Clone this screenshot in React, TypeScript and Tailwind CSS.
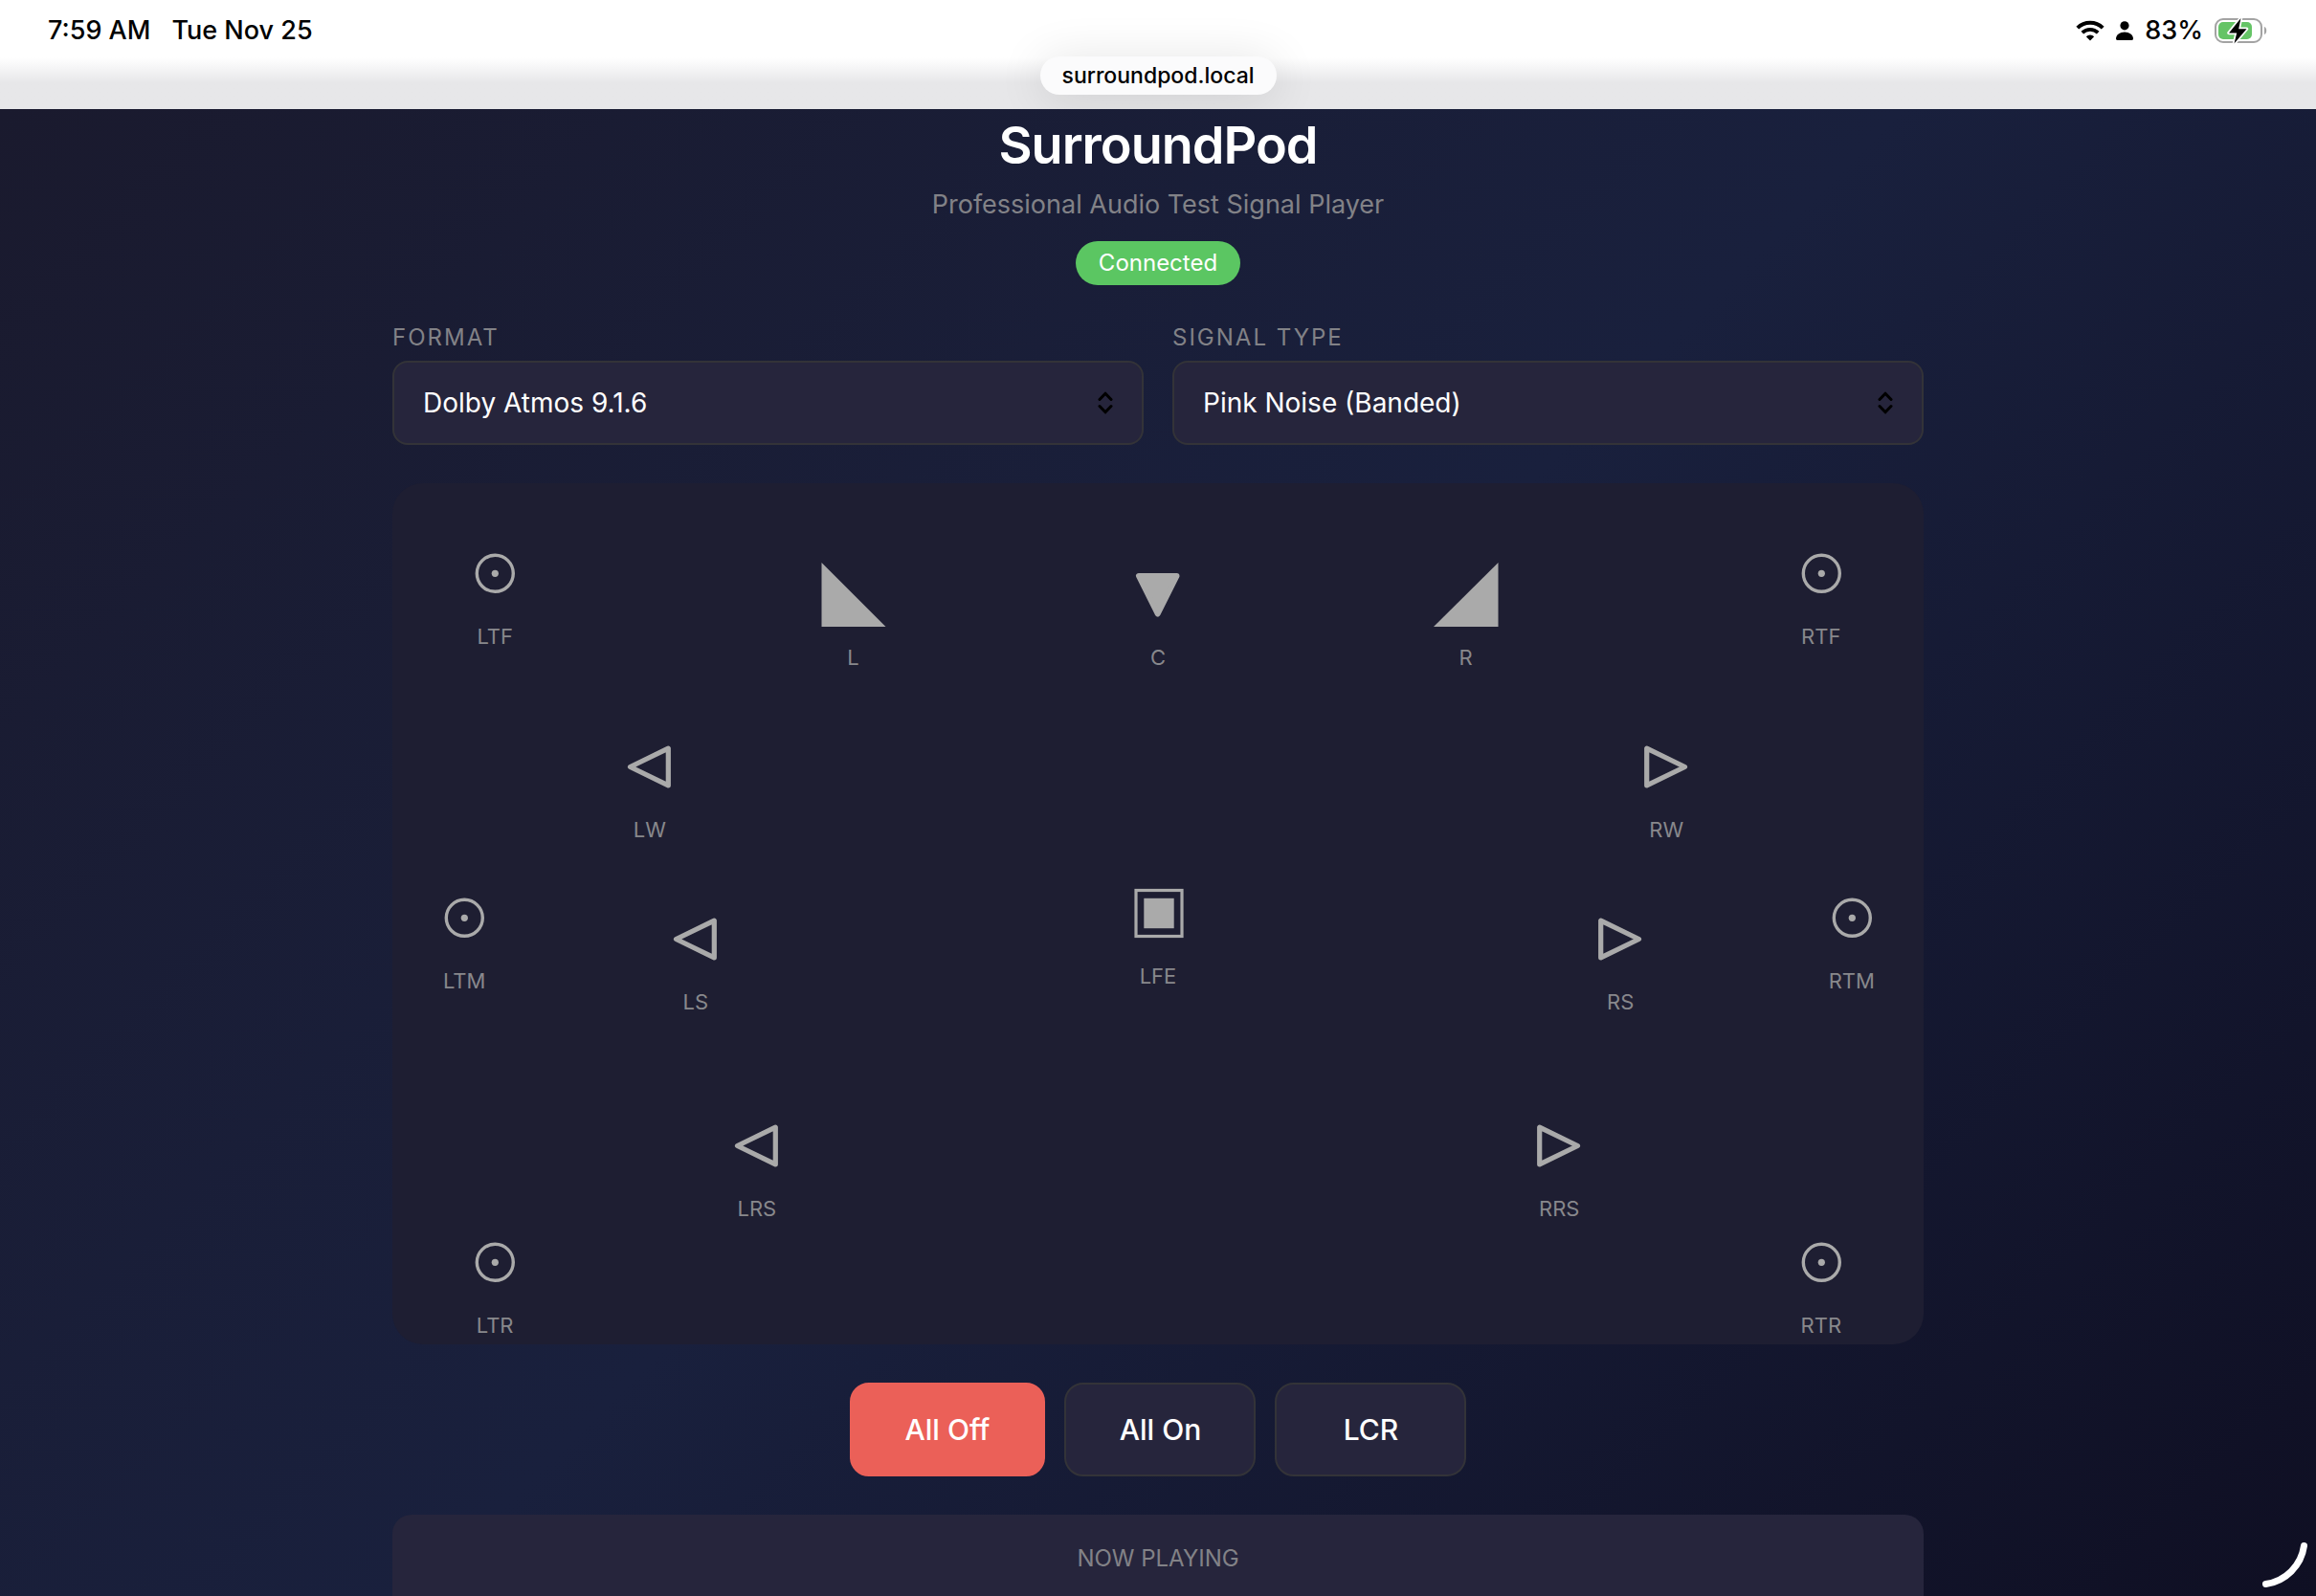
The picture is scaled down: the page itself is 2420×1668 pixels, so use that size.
import { useState } from 'react'

type Shape = 'left' | 'right' | 'center' | 'cornerLeft' | 'cornerRight' | 'sub' | 'height'

interface Speaker {
  id: string
  shape: Shape
  x: number
  y: number
}

// x and y are percentages of the room
const speakers: Speaker[] = [
  { id: 'LTF', shape: 'height', x: 6.7, y: 12.5 },
  { id: 'L', shape: 'cornerLeft', x: 30.1, y: 15 },
  { id: 'C', shape: 'center', x: 50, y: 15 },
  { id: 'R', shape: 'cornerRight', x: 70.1, y: 15 },
  { id: 'RTF', shape: 'height', x: 93.3, y: 12.5 },
  { id: 'LW', shape: 'left', x: 16.8, y: 35 },
  { id: 'RW', shape: 'right', x: 83.2, y: 35 },
  { id: 'LTM', shape: 'height', x: 4.7, y: 52.5 },
  { id: 'LS', shape: 'left', x: 19.8, y: 55 },
  { id: 'LFE', shape: 'sub', x: 50, y: 52 },
  { id: 'RS', shape: 'right', x: 80.2, y: 55 },
  { id: 'RTM', shape: 'height', x: 95.3, y: 52.5 },
  { id: 'LRS', shape: 'left', x: 23.8, y: 79 },
  { id: 'RRS', shape: 'right', x: 76.2, y: 79 },
  { id: 'LTR', shape: 'height', x: 6.7, y: 92.5 },
  { id: 'RTR', shape: 'height', x: 93.3, y: 92.5 },
]

const formats = ['Dolby Atmos 9.1.6', 'Dolby Atmos 7.1.4', 'Surround 5.1', 'Stereo']
const signals = ['Pink Noise (Banded)', 'Pink Noise (Full)', 'Sine Sweep']

function SpeakerIcon({ shape }: { shape: Shape }) {
  return (
    <svg viewBox="0 0 80 80" className="size-20" fill="none" stroke="currentColor" aria-hidden="true">
      {shape === 'height' && (
        <>
          <circle cx="40.3" cy="40.3" r="19" strokeWidth="3.4" />
          <circle cx="40.3" cy="40.3" r="3.6" fill="currentColor" stroke="none" />
        </>
      )}
      {shape === 'left' && (
        <path d="M59.300 21.200V59.800L19.500 40.500Z" strokeWidth="5.200" strokeLinejoin="round" />
      )}
      {shape === 'right' && (
        <path d="M19.700 21.200V59.800L59.500 40.500Z" strokeWidth="5.200" strokeLinejoin="round" />
      )}
      {shape === 'center' && (
        <path d="M20 21H59.500L39.700 60.500Z" fill="currentColor" strokeWidth="6" strokeLinejoin="round" />
      )}
      {shape === 'cornerLeft' && <path d="M6.5 7V74H73.5Z" fill="currentColor" stroke="none" />}
      {shape === 'cornerRight' && <path d="M73.5 7V74H6Z" fill="currentColor" stroke="none" />}
      {shape === 'sub' && (
        <>
          <rect x="17" y="16.500" width="48" height="48" strokeWidth="3.200" />
          <rect x="25.300" y="24.800" width="31.400" height="31.400" fill="currentColor" stroke="none" />
        </>
      )}
    </svg>
  )
}

function StatusBar() {
  return (
    <header className="relative h-[114px] shrink-0 bg-linear-to-b from-white from-53% to-[#e7e7e9] to-76% px-[50px] text-black">
      <div className="flex h-16 items-center justify-between text-[27px] leading-8 font-medium">
        <div className="flex gap-[22px]">
          <span>7:59 AM</span>
          <span>Tue Nov 25</span>
        </div>
        <div className="flex items-center gap-3">
          <svg viewBox="0 0 30 22" className="h-[22px] w-[30px]" fill="none" stroke="currentColor" aria-hidden="true">
            <path d="M1.8 8.2a18.8 18.8 0 0 1 26.4 0" strokeWidth="4" />
            <path d="M6.8 13.2a11.8 11.8 0 0 1 16.4 0" strokeWidth="3.8" />
            <path d="M15 21.4l-4.2-4.2a6 6 0 0 1 8.4 0Z" fill="currentColor" stroke="none" />
          </svg>
          <svg viewBox="0 0 18 20" className="h-5 w-[18px]" fill="currentColor" aria-hidden="true">
            <circle cx="9" cy="4.8" r="4.6" />
            <path d="M0 18.2C0 14.4 4 11.4 9 11.4s9 3 9 6.8c0 1.2-.6 1.8-1.8 1.8H1.8C.6 20 0 19.4 0 18.2Z" />
          </svg>
          <span>83%</span>
          <svg viewBox="0 0 56 28" className="h-7 w-14" aria-hidden="true">
            <rect x="1" y="2" width="48" height="24" rx="8" fill="none" stroke="#a3a3a3" strokeWidth="2" />
            <rect x="4" y="5" width="35" height="18" rx="5" fill="#65c466" />
            <path d="M52 10c3 1 3 7 0 8Z" fill="#a3a3a3" />
            <path
              d="M27.5 1 15 16.4h8.2L20.5 27.5 33.5 12.2h-8.3Z"
              fill="#000"
              stroke="#fff"
              strokeWidth="3.5"
              strokeLinejoin="round"
              paintOrder="stroke"
            />
          </svg>
        </div>
      </div>
      <div className="absolute inset-0 flex justify-center overflow-hidden pt-[59px]">
        <div className="h-10 rounded-full bg-[#fbfbfc] px-[23px] text-[23px] leading-10 font-medium shadow-[0_4px_50px_rgba(0,0,0,0.12)]">
          surroundpod.local
        </div>
      </div>
    </header>
  )
}

interface SelectFieldProps {
  id: string
  label: string
  options: string[]
}

function SelectField({ id, label, options }: SelectFieldProps) {
  return (
    <div className="flex flex-1 flex-col gap-3">
      <label htmlFor={id} className="text-2xl leading-6 tracking-[2px] text-[#828287] uppercase">
        {label}
      </label>
      <div className="relative">
        <select
          id={id}
          className="h-[88px] w-full appearance-none rounded-2xl border-2 border-[#333338] bg-[#26253c] px-[30px] text-[28px] text-white"
        >
          {options.map((option) => (
            <option key={option}>{option}</option>
          ))}
        </select>
        <svg
          viewBox="0 0 16 24"
          className="pointer-events-none absolute top-8 right-8 h-6 w-4"
          fill="none"
          stroke="#000"
          strokeWidth="3"
          strokeLinecap="round"
          strokeLinejoin="round"
          aria-hidden="true"
        >
          <path d="M2 8.5 8 2.2l6 6.3M2 15.5l6 6.3 6-6.3" />
        </svg>
      </div>
    </div>
  )
}

export default function App() {
  const [active, setActive] = useState<string[]>([])

  const toggle = (id: string) => {
    if (active.includes(id)) {
      setActive(active.filter((item) => item !== id))
    } else {
      setActive([...active, id])
    }
  }

  return (
    <div className="relative flex h-screen flex-col overflow-hidden font-[Inter,sans-serif]">
      <StatusBar />
      <main className="min-h-0 flex-1 overflow-hidden bg-[linear-gradient(135deg,#1a1a2e_0%,#19203d_50%,#0f0f23_100%)] pt-1">
        <div className="mx-auto w-full max-w-[1600px]">
          <div className="flex flex-col items-center">
            <h1 className="text-[54px] leading-[68px] font-semibold tracking-[-1px] text-white">SurroundPod</h1>
            <p className="mt-2.5 text-[27px] leading-9 text-[#828287]">Professional Audio Test Signal Player</p>
            <span className="mt-5 h-[46px] rounded-full bg-[#5bc662] px-6 text-2xl leading-[46px] text-white">
              Connected
            </span>
          </div>

          <div className="mt-[43px] flex gap-[30px]">
            <SelectField id="format" label="Format" options={formats} />
            <SelectField id="signal" label="Signal Type" options={signals} />
          </div>

          <div className="relative mt-10 aspect-video rounded-4xl bg-[#1e1e32]">
            {speakers.map(({ id, shape, x, y }) => (
              <button
                key={id}
                type="button"
                aria-pressed={active.includes(id)}
                onClick={() => toggle(id)}
                className="absolute flex -translate-x-1/2 -translate-y-1/2 flex-col items-center gap-3.5 text-[#aaaaaa] aria-pressed:text-[#5bc662]"
                style={{ left: `${x}%`, top: `${y}%` }}
              >
                <SpeakerIcon shape={shape} />
                <span className="text-[22px] leading-6 text-[#88888c]">{id}</span>
              </button>
            ))}
          </div>

          <div className="mt-10 flex justify-center gap-5 text-[30px] font-medium text-white">
            <button
              type="button"
              onClick={() => setActive([])}
              className="h-[98px] min-w-[200px] rounded-[20px] border-2 border-[#eb6058] bg-[#eb6058] px-14"
            >
              All Off
            </button>
            <button
              type="button"
              onClick={() => setActive(speakers.map((speaker) => speaker.id))}
              className="h-[98px] min-w-[200px] rounded-[20px] border-2 border-[#333338] bg-[#26253c]"
            >
              All On
            </button>
            <button
              type="button"
              onClick={() => setActive(['L', 'C', 'R'])}
              className="h-[98px] min-w-[200px] rounded-[20px] border-2 border-[#333338] bg-[#26253c]"
            >
              LCR
            </button>
          </div>

          <section className="mt-10 rounded-[20px] bg-[#26253c] px-8 pt-[34px] pb-20 text-center">
            <h2 className="text-2xl leading-6 text-[#828287]">NOW PLAYING</h2>
          </section>
        </div>
      </main>
      <svg
        viewBox="0 0 60 60"
        className="absolute right-0 bottom-0 size-15"
        fill="none"
        stroke="#fff"
        strokeWidth="7"
        strokeLinecap="round"
        aria-hidden="true"
      >
        <path d="M47.5 7.500A47 47 0 0 1 7.500 47.500" />
      </svg>
    </div>
  )
}
